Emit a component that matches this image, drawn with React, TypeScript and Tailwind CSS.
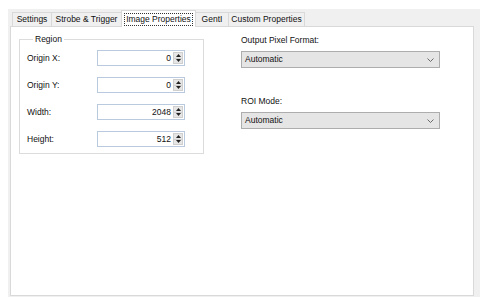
import React from "react";

const font = { fontFamily: '"Liberation Sans", Arial, sans-serif' };

function Tab({ label, w, selected }: { label: string; w: string; selected?: boolean }) {
  if (selected) {
    return (
      <div
        className={`${w} h-[17px] -ml-px bg-white border border-b-0 border-[#d9d9d9] flex items-center justify-center relative z-10 -mb-px`}
      >
        <span className="border border-dotted border-[#333] px-[1px] leading-[11px] h-[13px] flex items-center">
          {label}
        </span>
      </div>
    );
  }
  return (
    <div
      className={`${w} h-[14px] -ml-px bg-[#f0f0f0] border border-b-0 border-[#d9d9d9] flex items-center justify-center`}
    >
      {label}
    </div>
  );
}

function Spin({ value }: { value: string }) {
  return (
    <div className="w-[88px] h-[16px] border border-[#b9c9de] bg-white flex">
      <div className="flex-1 flex items-center justify-end pr-[2px]">{value}</div>
      <div className="w-[11px] flex flex-col py-[1px] pr-[1px]">
        <div className="flex-1 bg-[#e6e6e6] border border-[#cfcfcf] flex items-center justify-center">
          <svg width="5" height="3" viewBox="0 0 5 3">
            <path d="M0 3 L2.5 0 L5 3 Z" fill="#222" />
          </svg>
        </div>
        <div className="flex-1 bg-[#e6e6e6] border border-[#cfcfcf] border-t-0 flex items-center justify-center">
          <svg width="5" height="3" viewBox="0 0 5 3">
            <path d="M0 0 L2.5 3 L5 0 Z" fill="#222" />
          </svg>
        </div>
      </div>
    </div>
  );
}

function Row({ label, value }: { label: string; value: string }) {
  return (
    <div className="flex items-center h-[16px]">
      <div className="w-[70px]">{label}</div>
      <Spin value={value} />
    </div>
  );
}

function Combo({ value }: { value: string }) {
  return (
    <div className="w-[199px] h-[17px] bg-[#e5e5e5] border border-[#adadad] flex items-center pl-[3px] pr-[5px]">
      <div className="flex-1">{value}</div>
      <svg width="7" height="4" viewBox="0 0 7 4">
        <path d="M0.5 0.5 L3.5 3.5 L6.5 0.5" fill="none" stroke="#6b6b6b" strokeWidth="1" />
      </svg>
    </div>
  );
}

export default function App() {
  return (
    <div
      className="w-[502px] h-[305px] bg-white pt-[9px] pl-[8px] text-[8.5px] text-[#111] leading-none"
      style={font}
    >
      <div className="w-[472px] h-[288px] bg-[#f0f0f0] flex flex-col pl-[2px] pr-[6px] pb-[1px]">
        <div className="flex items-end h-[17px] pl-[3px]">
          <Tab label="Settings" w="w-[40px]" />
          <Tab label="Strobe & Trigger" w="w-[71px]" />
          <Tab label="Image Properties" w="w-[75px]" selected />
          <Tab label="GentI" w="w-[34px]" />
          <Tab label="Custom Properties" w="w-[77px]" />
        </div>
        <div className="flex-1 bg-white border border-[#d9d9d9] pl-[8px] pt-[7px] flex gap-[37px]">
          <fieldset className="w-[185px] h-[120px] border border-[#dcdcdc] pl-[7px] pt-[6px] flex flex-col gap-[11px]">
            <legend className="ml-[6px] px-[2px] leading-[10px]">Region</legend>
            <Row label="Origin X:" value="0" />
            <Row label="Origin Y:" value="0" />
            <Row label="Width:" value="2048" />
            <Row label="Height:" value="512" />
          </fieldset>
          <div className="flex flex-col pt-[2px]">
            <div className="h-[10px] mb-[5px]">Output Pixel Format:</div>
            <Combo value="Automatic" />
            <div className="h-[10px] mt-[29px] mb-[5px]">ROI Mode:</div>
            <Combo value="Automatic" />
          </div>
        </div>
      </div>
    </div>
  );
}
